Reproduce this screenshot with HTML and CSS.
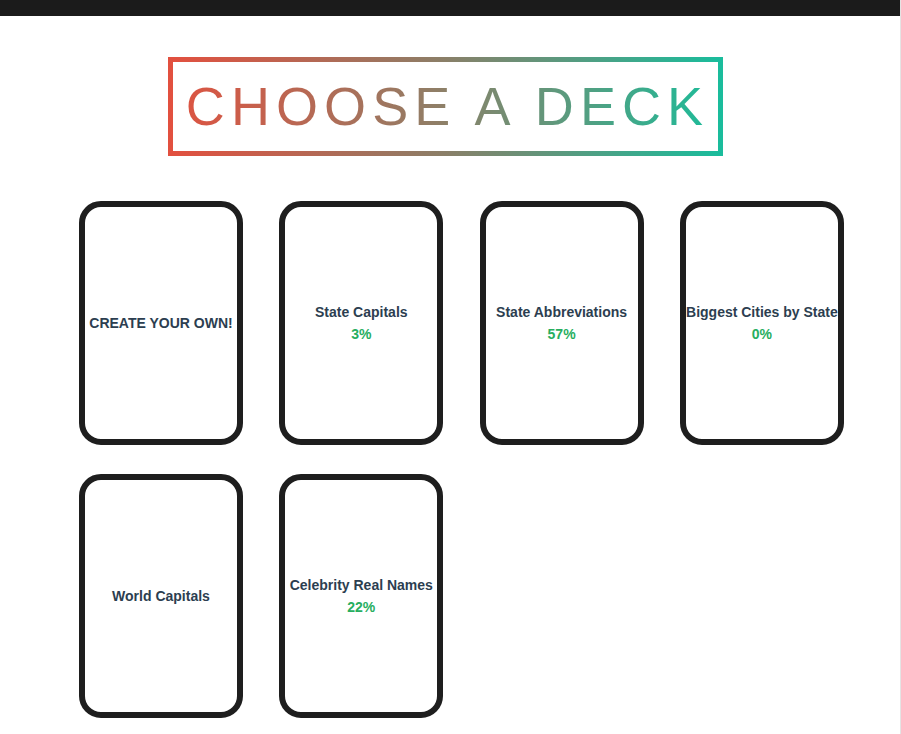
FILE: index.html
```html
<!DOCTYPE html>
<html>
<head>
<meta charset="utf-8">
<link rel="stylesheet" href="styles.css">
</head>
<body>
<div class="topbar"></div>
<main class="page">
  <div class="title-wrap">
    <h1 class="title"><span class="title-text">CHOOSE A DECK</span></h1>
  </div>
  <div class="decks">
    <div class="card"><div class="name">CREATE YOUR OWN!</div></div>
    <div class="card"><div class="name">State Capitals</div><div class="pct">3%</div></div>
    <div class="card"><div class="name">State Abbreviations</div><div class="pct">57%</div></div>
    <div class="card"><div class="name">Biggest Cities by State</div><div class="pct">0%</div></div>
    <div class="card"><div class="name">World Capitals</div></div>
    <div class="card"><div class="name">Celebrity Real Names</div><div class="pct">22%</div></div>
  </div>
</main>
</body>
</html>
```

FILE: styles.css
```css
html, body {
  margin: 0;
  padding: 0;
  background: #ffffff;
  font-family: "Liberation Sans", Arial, sans-serif;
}
body {
  border-right: 1px solid #e4e4e4;
  min-height: 734px;
  box-sizing: border-box;
  overflow: hidden;
}
.topbar {
  height: 16px;
  background: #1b1b1b;
}
.page {
  padding-top: 41px;
}
.title-wrap {
  display: flex;
  justify-content: flex-start;
  padding-left: 168px;
}
.title {
  margin: 0;
  width: 555px;
  height: 99px;
  box-sizing: border-box;
  border: 5px solid;
  border-image: linear-gradient(90deg, #e2503f, #8a7f68 50%, #1abc9c) 1;
  display: flex;
  align-items: center;
  justify-content: center;
  font-weight: 400;
  font-size: 54px;
  letter-spacing: 6.1px;
  line-height: 1;
}
.title-text {
  background: linear-gradient(90deg, #dc5442, #8d8068 50%, #1fba98);
  -webkit-background-clip: text;
  background-clip: text;
  color: transparent;
  padding-left: 4px;
  padding-bottom: 1px;
}
.decks {
  display: grid;
  grid-template-columns: repeat(4, 164px);
  column-gap: 36.3px;
  row-gap: 29px;
  padding-left: 79px;
  margin-top: 45px;
}
.card {
  height: 244px;
  box-sizing: border-box;
  border: 6px solid #1e1e1e;
  border-radius: 22px;
  display: flex;
  flex-direction: column;
  align-items: center;
  justify-content: center;
  text-align: center;
}
.name {
  font-size: 14px;
  font-weight: 700;
  color: #2c3e50;
  white-space: nowrap;
  line-height: 16px;
}
.pct {
  font-size: 14px;
  font-weight: 700;
  color: #27ae60;
  line-height: 16px;
  margin-top: 6px;
}
```
